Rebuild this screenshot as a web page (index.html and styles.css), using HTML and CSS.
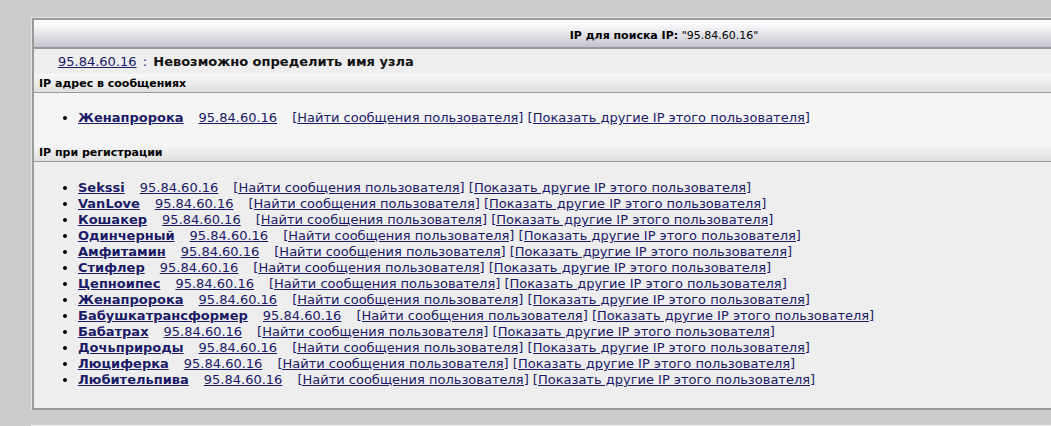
FILE: index.html
```html
<!DOCTYPE html>
<html lang="ru">
<head>
<meta charset="utf-8">
<title>IP</title>
<link rel="stylesheet" href="styles.css">
</head>
<body>
<div class="frame">
  <div class="panel">
    <div class="head"><b>IP для поиска IP:</b> "95.84.60.16"</div>
    <div class="host"><a href="#">95.84.60.16</a> <span class="colon">:</span> <b>Невозможно определить имя узла</b></div>
    <div class="sect">IP адрес в сообщениях</div>
    <div class="list light">
      <ul>
        <li><a class="nm" href="#">Женапророка</a><a class="ip" href="#">95.84.60.16</a><a href="#">[Найти сообщения пользователя]</a> <a href="#">[Показать другие IP этого пользователя]</a></li>
      </ul>
    </div>
    <div class="sect">IP при регистрации</div>
    <div class="list reg">
      <ul>
        <li><a class="nm" href="#">Sekssi</a><a class="ip" href="#">95.84.60.16</a><a href="#">[Найти сообщения пользователя]</a> <a href="#">[Показать другие IP этого пользователя]</a></li>
        <li><a class="nm" href="#">VanLove</a><a class="ip" href="#">95.84.60.16</a><a href="#">[Найти сообщения пользователя]</a> <a href="#">[Показать другие IP этого пользователя]</a></li>
        <li><a class="nm" href="#">Кошакер</a><a class="ip" href="#">95.84.60.16</a><a href="#">[Найти сообщения пользователя]</a> <a href="#">[Показать другие IP этого пользователя]</a></li>
        <li><a class="nm" href="#">Одинчерный</a><a class="ip" href="#">95.84.60.16</a><a href="#">[Найти сообщения пользователя]</a> <a href="#">[Показать другие IP этого пользователя]</a></li>
        <li><a class="nm" href="#">Амфитамин</a><a class="ip" href="#">95.84.60.16</a><a href="#">[Найти сообщения пользователя]</a> <a href="#">[Показать другие IP этого пользователя]</a></li>
        <li><a class="nm" href="#">Стифлер</a><a class="ip" href="#">95.84.60.16</a><a href="#">[Найти сообщения пользователя]</a> <a href="#">[Показать другие IP этого пользователя]</a></li>
        <li><a class="nm" href="#">Цепноипес</a><a class="ip" href="#">95.84.60.16</a><a href="#">[Найти сообщения пользователя]</a> <a href="#">[Показать другие IP этого пользователя]</a></li>
        <li><a class="nm" href="#">Женапророка</a><a class="ip" href="#">95.84.60.16</a><a href="#">[Найти сообщения пользователя]</a> <a href="#">[Показать другие IP этого пользователя]</a></li>
        <li><a class="nm" href="#">Бабушкатрансформер</a><a class="ip" href="#">95.84.60.16</a><a href="#">[Найти сообщения пользователя]</a> <a href="#">[Показать другие IP этого пользователя]</a></li>
        <li><a class="nm" href="#">Бабатрах</a><a class="ip" href="#">95.84.60.16</a><a href="#">[Найти сообщения пользователя]</a> <a href="#">[Показать другие IP этого пользователя]</a></li>
        <li><a class="nm" href="#">Дочьприроды</a><a class="ip" href="#">95.84.60.16</a><a href="#">[Найти сообщения пользователя]</a> <a href="#">[Показать другие IP этого пользователя]</a></li>
        <li><a class="nm" href="#">Люциферка</a><a class="ip" href="#">95.84.60.16</a><a href="#">[Найти сообщения пользователя]</a> <a href="#">[Показать другие IP этого пользователя]</a></li>
        <li><a class="nm" href="#">Любительпива</a><a class="ip" href="#">95.84.60.16</a><a href="#">[Найти сообщения пользователя]</a> <a href="#">[Показать другие IP этого пользователя]</a></li>
      </ul>
    </div>
  </div>
</div>
<div class="next"></div>
</body>
</html>
```

FILE: styles.css
```css
html { overflow: hidden; background: #cccccc; }
body {
  margin: 0;
  padding: 17px 0 0 31px;
  font-family: "DejaVu Sans", Verdana, sans-serif;
  color: #000;
}
.frame {
  width: 1262px;
  border-top: 1px solid #e2e2e2;
  border-left: 1px solid #e2e2e2;
}
.panel {
  border: 2px solid #9a9a9a;
  border-right: none;
  background: #eeeeee;
}
a { color: #1a1a66; text-decoration: underline; }
.head {
  height: 25px;
  line-height: 27px;
  border-top: 2px solid #ffffff;
  border-bottom: 2px solid #9a9a9a;
  background: linear-gradient(to bottom, #ffffff 0%, #ececf0 35%, #c4c4cf 100%);
  text-align: center;
  font-size: 11px;
}
.host {
  height: 25px;
  line-height: 25px;
  padding-left: 24px;
  font-size: 13px;
  background: #eeeeee;
  border-bottom: 1px solid #f8f8f8;
}
.host b { font-weight: bold; color: #111; }
.colon { color: #1a1a66; margin: 0 2px; }
.sect {
  height: 17px;
  line-height: 17px;
  padding-left: 5px;
  font-size: 11px;
  font-weight: bold;
  background: linear-gradient(to bottom, #f7f7f7, #e0e0e0);
  border-bottom: 1px solid #9a9a9a;
}
.list { background: #eeeeee; }
.list.light { background: #f5f5f5; padding: 17px 0 18px; }
.list.reg { padding: 18px 0 20px; }
ul {
  margin: 0;
  padding-left: 44px;
  font-size: 13px;
  line-height: 16px;
}
li { white-space: nowrap; }
.nm { font-weight: bold; margin-right: 15px; }
.ip { margin-right: 15px; }
.next {
  margin-top: 15px;
  height: 6px;
  background: #f2f2f2;
}
```
